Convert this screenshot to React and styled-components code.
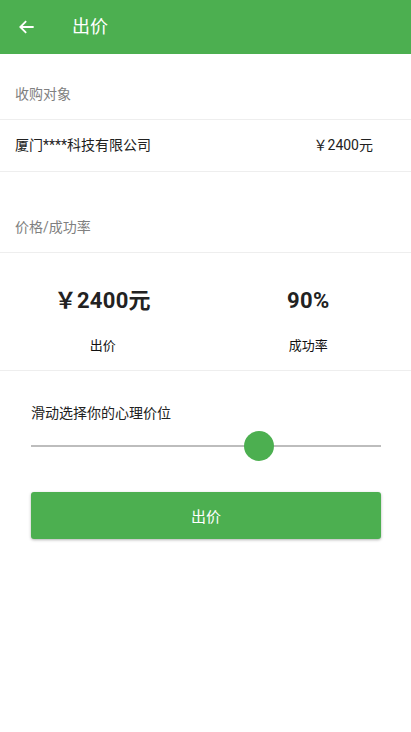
import React from "react";
import styled, { createGlobalStyle } from "styled-components";

const Global = createGlobalStyle`
  html, body { margin: 0; padding: 0; background: #fff; }
  body { font-family: Roboto, "Noto Sans CJK SC", sans-serif; color: #212121; }
  * { box-sizing: border-box; }
`;

const Page = styled.div`
  width: 411px;
  min-height: 732px;
  background: #fff;
  display: flex;
  flex-direction: column;
`;

const Header = styled.header`
  height: 54px;
  background: #4caf50;
  display: flex;
  align-items: center;
  padding-left: 17px;
  color: #fff;
`;

const BackIcon = styled.svg`
  width: 20px;
  height: 20px;
  display: block;
`;

const Title = styled.h1`
  margin: 0 0 0 35px;
  font-size: 18px;
  font-weight: 400;
  line-height: 1;
`;

const SectionTitle = styled.div`
  height: ${(p) => p.$h}px;
  display: flex;
  align-items: flex-end;
  padding: 0 15px 16px;
  font-size: 14px;
  color: #808080;
  border-bottom: 1px solid #eeeeee;
`;

const Row = styled.div`
  height: 52px;
  display: flex;
  align-items: center;
  justify-content: space-between;
  padding: 0 38px 3px 15px;
  font-size: 14px;
  color: #212121;
  border-bottom: 1px solid #eeeeee;
`;

const Stats = styled.div`
  display: grid;
  grid-template-columns: 1fr 1fr;
  height: 118px;
  border-bottom: 1px solid #eeeeee;
`;

const Stat = styled.div`
  display: flex;
  flex-direction: column;
  align-items: center;
  padding-top: 35px;
`;

const StatValue = styled.div`
  font-size: 22px;
  font-weight: 700;
  color: #222;
  line-height: 26px;
  letter-spacing: 0.3px;
`;

const StatLabel = styled.div`
  margin-top: 24px;
  font-size: 13px;
  color: #111;
  line-height: 16px;
`;

const SliderBlock = styled.div`
  padding: 32px 30px 0 31px;
`;

const SliderLabel = styled.div`
  font-size: 14px;
  color: #212121;
  line-height: 20px;
`;

const Track = styled.div`
  position: relative;
  margin-top: 8px;
  height: 30px;
  display: flex;
  align-items: center;
`;

const Line = styled.div`
  width: 100%;
  height: 2px;
  background: #bdbdbd;
`;

const Thumb = styled.div`
  position: absolute;
  top: 0;
  width: 30px;
  height: 30px;
  margin-left: -15px;
  border-radius: 50%;
  background: #4caf50;
`;

const Button = styled.button`
  margin: 31px 30px 0 31px;
  height: 47px;
  border: none;
  border-radius: 3px;
  background: #4caf50;
  color: #fff;
  font-family: inherit;
  font-size: 15px;
  box-shadow: 0 1px 3px rgba(0, 0, 0, 0.3);
`;

export default function App() {
  const pct = 65;
  return (
    <Page>
      <Global />
      <Header>
        <BackIcon viewBox="0 0 24 24" fill="none" stroke="#fff" strokeWidth="2.2">
          <path d="M20 12H4M11 5l-7 7 7 7" />
        </BackIcon>
        <Title>出价</Title>
      </Header>
      <SectionTitle $h={66}>收购对象</SectionTitle>
      <Row>
        <span>厦门****科技有限公司</span>
        <span>￥2400元</span>
      </Row>
      <SectionTitle $h={81}>价格/成功率</SectionTitle>
      <Stats>
        <Stat>
          <StatValue>￥2400元</StatValue>
          <StatLabel>出价</StatLabel>
        </Stat>
        <Stat>
          <StatValue>90%</StatValue>
          <StatLabel>成功率</StatLabel>
        </Stat>
      </Stats>
      <SliderBlock>
        <SliderLabel>滑动选择你的心理价位</SliderLabel>
        <Track>
          <Line />
          <Thumb style={{ left: `${pct}%` }} />
        </Track>
      </SliderBlock>
      <Button>出价</Button>
    </Page>
  );
}
